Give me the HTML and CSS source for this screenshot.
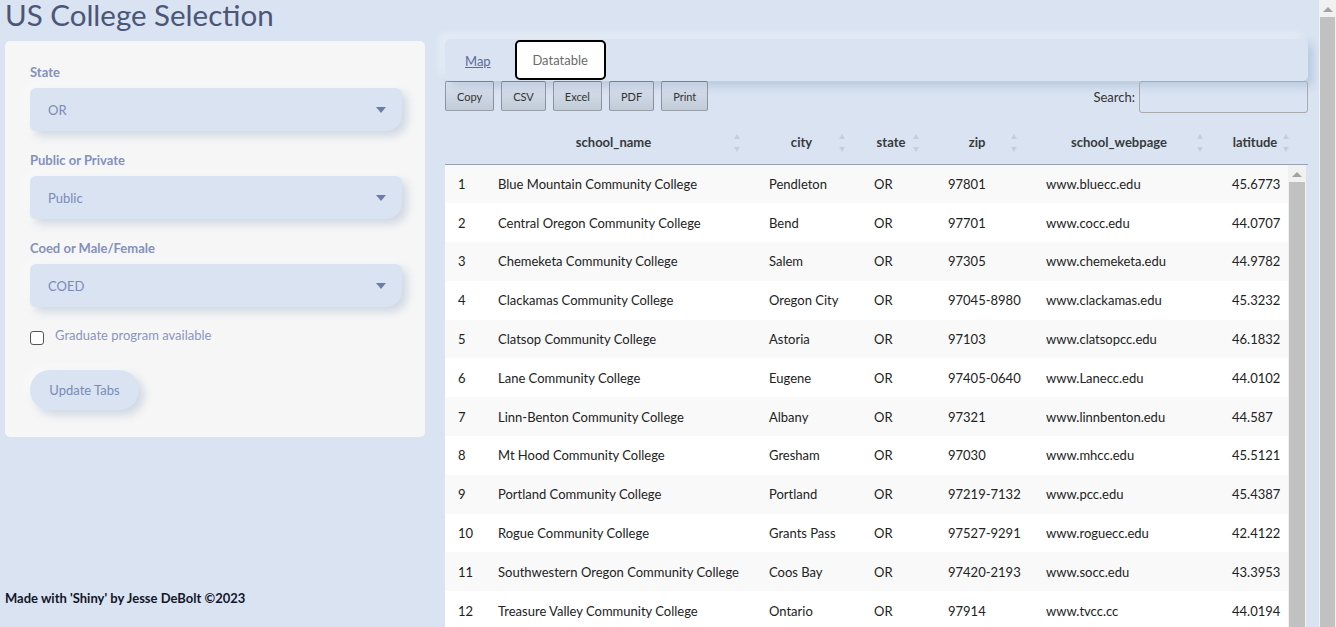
FILE: index.html
```html
<!DOCTYPE html>
<html>
<head>
<meta charset="utf-8">
<title>US College Selection</title>
<link rel="stylesheet" href="styles.css">
</head>
<body>
<div class="page">
  <h1 class="title">US College Selection</h1>
  <div class="layout">
    <aside class="sidebar-col">
      <div class="sidebar">
        <label class="field-label">State</label>
        <div class="select"><span>OR</span><span class="caret"></span></div>
        <label class="field-label">Public or Private</label>
        <div class="select"><span>Public</span><span class="caret"></span></div>
        <label class="field-label">Coed or Male/Female</label>
        <div class="select"><span>COED</span><span class="caret"></span></div>
        <div class="check-row"><span class="checkbox"></span><span class="check-label">Graduate program available</span></div>
        <button class="update-btn">Update Tabs</button>
      </div>
      <div class="footer">Made with 'Shiny' by Jesse DeBolt ©2023</div>
    </aside>
    <main class="main">
      <nav class="tabs">
        <a class="tab-link">Map</a>
        <span class="tab-active">Datatable</span>
      </nav>
      <div class="toolbar">
        <div class="dt-buttons">
          <button class="dt-btn">Copy</button>
          <button class="dt-btn">CSV</button>
          <button class="dt-btn">Excel</button>
          <button class="dt-btn">PDF</button>
          <button class="dt-btn">Print</button>
        </div>
        <label class="search">Search: <span class="search-input"></span></label>
      </div>
      <table class="dt-head">
        <colgroup><col class="c-idx"><col class="c-name"><col class="c-city"><col class="c-state"><col class="c-zip"><col class="c-web"><col class="c-lat-h"></colgroup>
        <thead><tr>
          <th class="th-idx"></th>
          <th>school_name<span class="sort"></span></th>
          <th>city<span class="sort"></span></th>
          <th>state<span class="sort"></span></th>
          <th>zip<span class="sort"></span></th>
          <th>school_webpage<span class="sort"></span></th>
          <th>latitude<span class="sort"></span></th>
        </tr></thead>
      </table>
      <div class="dt-body">
        <table class="dt-rows">
          <colgroup><col class="c-idx"><col class="c-name"><col class="c-city"><col class="c-state"><col class="c-zip"><col class="c-web"><col class="c-lat"></colgroup>
          <tbody>
            <tr><td class="idx">1</td><td>Blue Mountain Community College</td><td>Pendleton</td><td>OR</td><td>97801</td><td>www.bluecc.edu</td><td class="num">45.6773</td></tr>
            <tr><td class="idx">2</td><td>Central Oregon Community College</td><td>Bend</td><td>OR</td><td>97701</td><td>www.cocc.edu</td><td class="num">44.0707</td></tr>
            <tr><td class="idx">3</td><td>Chemeketa Community College</td><td>Salem</td><td>OR</td><td>97305</td><td>www.chemeketa.edu</td><td class="num">44.9782</td></tr>
            <tr><td class="idx">4</td><td>Clackamas Community College</td><td>Oregon City</td><td>OR</td><td>97045-8980</td><td>www.clackamas.edu</td><td class="num">45.3232</td></tr>
            <tr><td class="idx">5</td><td>Clatsop Community College</td><td>Astoria</td><td>OR</td><td>97103</td><td>www.clatsopcc.edu</td><td class="num">46.1832</td></tr>
            <tr><td class="idx">6</td><td>Lane Community College</td><td>Eugene</td><td>OR</td><td>97405-0640</td><td>www.Lanecc.edu</td><td class="num">44.0102</td></tr>
            <tr><td class="idx">7</td><td>Linn-Benton Community College</td><td>Albany</td><td>OR</td><td>97321</td><td>www.linnbenton.edu</td><td class="num lat-short">44.587</td></tr>
            <tr><td class="idx">8</td><td>Mt Hood Community College</td><td>Gresham</td><td>OR</td><td>97030</td><td>www.mhcc.edu</td><td class="num">45.5121</td></tr>
            <tr><td class="idx">9</td><td>Portland Community College</td><td>Portland</td><td>OR</td><td>97219-7132</td><td>www.pcc.edu</td><td class="num">45.4387</td></tr>
            <tr><td class="idx">10</td><td>Rogue Community College</td><td>Grants Pass</td><td>OR</td><td>97527-9291</td><td>www.roguecc.edu</td><td class="num">42.4122</td></tr>
            <tr><td class="idx">11</td><td>Southwestern Oregon Community College</td><td>Coos Bay</td><td>OR</td><td>97420-2193</td><td>www.socc.edu</td><td class="num">43.3953</td></tr>
            <tr><td class="idx">12</td><td>Treasure Valley Community College</td><td>Ontario</td><td>OR</td><td>97914</td><td>www.tvcc.cc</td><td class="num">44.0194</td></tr>
          </tbody>
        </table>
        <div class="inner-scroll"><span class="arrow-up"></span><span class="inner-thumb"></span></div>
      </div>
    </main>
  </div>
</div>
<div class="page-scroll"><span class="arrow-up"></span><span class="page-thumb"></span></div>
</body>
</html>
```

FILE: styles.css
```css
* { box-sizing: border-box; }
html, body { margin: 0; padding: 0; }
body {
  width: 1336px;
  height: 627px;
  overflow: hidden;
  display: flex;
  background: #d9e3f1;
  font-family: Lato, "Noto Sans", sans-serif;
  color: #373a3c;
}
.page { flex: 1; padding: 0 11px 0 5px; }
.title {
  margin: 0;
  font-size: 29.5px;
  line-height: 30px;
  font-weight: 400;
  color: #4b5679;
}
.layout { display: flex; gap: 20px; margin-top: 11px; }
.sidebar-col { width: 420px; display: flex; flex-direction: column; }
.sidebar {
  background: #f6f6f6;
  border-radius: 5px;
  padding: 23px 23px 27px 25px;
  display: flex;
  flex-direction: column;
  align-items: flex-start;
}
.field-label {
  font-size: 13px;
  line-height: 16px;
  font-weight: 700;
  color: #8390bd;
  margin-bottom: 8px;
}
.select {
  width: 100%;
  height: 43px;
  background: #d9e3f1;
  border-radius: 6px 6px 16px 6px;
  box-shadow: 5px 5px 10px rgba(55, 94, 148, .2), -5px -5px 10px rgba(255, 255, 255, .4);
  display: flex;
  align-items: center;
  justify-content: space-between;
  padding: 0 16px 0 18px;
  font-size: 13px;
  color: #7b8ab8;
  margin-bottom: 21px;
}
.caret {
  width: 0; height: 0;
  border-left: 5px solid transparent;
  border-right: 5px solid transparent;
  border-top: 6px solid #6f7cab;
}
.check-row { display: flex; align-items: flex-start; gap: 11px; margin-top: -1px; }
.checkbox {
  width: 14px; height: 14px;
  margin-top: 4px;
  border: 1.5px solid #555;
  border-radius: 3px;
  background: #fff;
}
.check-label { font-size: 13px; line-height: 16px; color: #8a95c0; }
.update-btn {
  margin-top: 25px;
  width: 109px;
  height: 40px;
  border: 0;
  border-radius: 20px;
  background: #d9e3f1;
  box-shadow: 5px 5px 10px rgba(55, 94, 148, .2), -5px -5px 10px rgba(255, 255, 255, .4);
  font-family: inherit;
  font-size: 13px;
  color: #7b8ab8;
  padding: 0;
}
.footer {
  margin-top: 153px;
  font-size: 13px;
  font-weight: 700;
  color: #14162a;
}
.main { width: 863px; margin-top: -2px; display: flex; flex-direction: column; }
.tabs {
  height: 42px;
  background: #d9e3f1;
  border-radius: 5px;
  box-shadow: 5px 5px 10px rgba(55, 94, 148, .2), -5px -5px 10px rgba(255, 255, 255, .4);
  display: flex;
  align-items: center;
  padding-left: 20px;
}
.tab-link {
  font-size: 13px;
  color: #5c6a9b;
  text-decoration: underline;
  margin-right: 24px;
  margin-top: 2px;
}
.tab-active {
  width: 91px;
  height: 40px;
  background: #fff;
  border: 2px solid #000;
  border-radius: 5px;
  display: flex;
  align-items: center;
  justify-content: center;
  font-size: 13px;
  color: #6b6b6b;
}
.toolbar { display: flex; justify-content: space-between; align-items: flex-start; }
.dt-buttons { display: flex; gap: 7px; }
.dt-btn {
  height: 30px;
  padding: 0 11px;
  border: 1px solid rgba(0, 0, 0, .3);
  border-radius: 2px;
  background: linear-gradient(to bottom, rgba(230, 230, 230, .1) 0%, rgba(0, 0, 0, .1) 100%);
  font-family: inherit;
  font-size: 11px;
  color: #333;
}
.search { display: flex; align-items: center; gap: 4px; font-size: 13px; color: #333; height: 32px; }
.search-input {
  width: 169px; height: 32px;
  border: 1px solid #aaa;
  border-radius: 3px;
}
table { border-collapse: collapse; table-layout: fixed; }
.c-idx { width: 43px; }
.c-name { width: 271px; }
.c-city { width: 105px; }
.c-state { width: 74px; }
.c-zip { width: 98px; }
.c-web { width: 186px; }
.c-lat { width: 66px; }
.c-lat-h { width: 86px; }
.dt-head { width: 863px; margin-top: 11px; }
.dt-head th {
  position: relative;
  height: 40px;
  padding: 0 30px 4px 10px;
  font-size: 13px;
  font-weight: 700;
  text-align: center;
  color: #373a3c;
  border-bottom: 1px solid #98a1b3;
}
.sort { position: absolute; right: 17px; top: 10px; width: 8px; height: 18px; }
.sort::before, .sort::after {
  content: "";
  position: absolute;
  left: 0;
  border-left: 3px solid transparent;
  border-right: 3px solid transparent;
}
.sort::before { top: 0; border-bottom: 5px solid #c7cedb; }
.sort::after { bottom: 0; border-top: 5px solid #c7cedb; }
.dt-body { display: flex; width: 861px; }
.dt-rows { width: 843px; background: #fff; }
.dt-rows td {
  height: 38.8px;
  padding: 0 10px;
  font-size: 13px;
  color: #222;
  white-space: nowrap;
}
.dt-rows tr:nth-child(odd) td { background: #f9f9f9; }
.dt-rows td.idx { padding-left: 13px; }
.dt-rows td.num { text-align: right; padding-right: 8px; }
.dt-rows td.lat-short { text-align: left; padding-left: 10px; }
.inner-scroll { width: 18px; background: #f1f1f1; display: flex; flex-direction: column; align-items: center; }
.arrow-up {
  margin: 7px 0 5px;
  width: 0; height: 0;
  border-left: 5px solid transparent;
  border-right: 5px solid transparent;
  border-bottom: 5px solid #a3a3a3;
}
.inner-thumb { flex: 1; width: 16px; background: #c1c1c1; }
.page-scroll { width: 17px; background: #f1f1f1; display: flex; flex-direction: column; align-items: center; }
.page-thumb { flex: 1; width: 15px; background: #c1c1c1; }
```
